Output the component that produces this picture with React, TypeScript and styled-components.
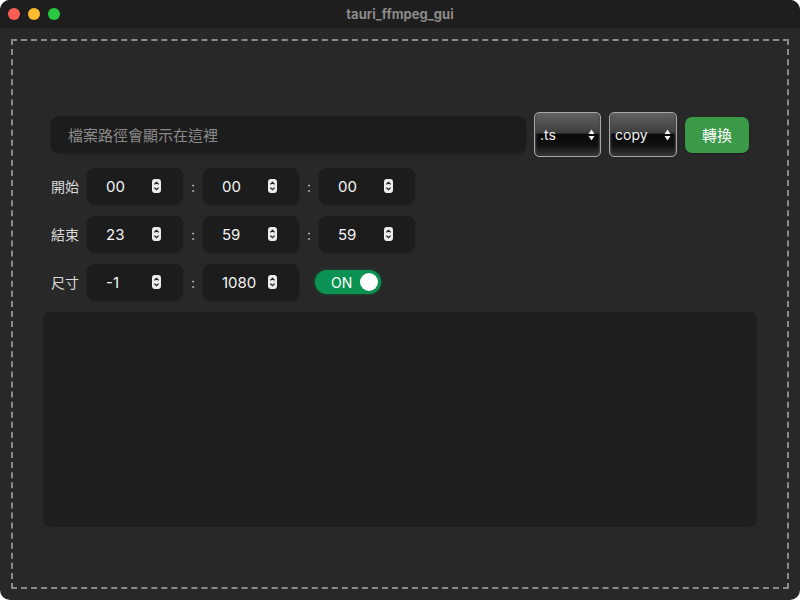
import React from 'react';
import styled, { createGlobalStyle } from 'styled-components';

const GlobalStyle = createGlobalStyle`
  html, body {
    margin: 0;
    padding: 0;
    background: #ffffff;
  }
  * {
    box-sizing: border-box;
  }
`;

const font = `"Inter", "Noto Sans CJK TC", sans-serif`;

const Window = styled.div`
  width: 800px;
  height: 600px;
  border-radius: 10px;
  overflow: hidden;
  background: #282828;
  display: flex;
  flex-direction: column;
  font-family: ${font};
`;

const TitleBar = styled.div`
  height: 28px;
  flex-shrink: 0;
  background: #1e1e1e;
  display: flex;
  align-items: center;
  justify-content: center;
  position: relative;
`;

const Lights = styled.div`
  position: absolute;
  left: 8px;
  top: 8px;
  display: flex;
  gap: 8px;
`;

const Light = styled.span<{ $color: string }>`
  width: 12px;
  height: 12px;
  border-radius: 50%;
  background: ${(p) => p.$color};
`;

const Title = styled.div`
  color: #8a8a8a;
  font-size: 13px;
  font-weight: 700;
`;

const Body = styled.div`
  flex: 1;
  display: flex;
  padding: 11px;
`;

const Frame = styled.div`
  flex: 1;
  border: 2px dashed #8a8a8a;
  display: flex;
  flex-direction: column;
  padding: 71px 30px 60px 30px;
`;

const Form = styled.div`
  display: flex;
  flex-direction: column;
  padding: 0 8px 0 8px;
`;

const TopRow = styled.div`
  display: flex;
  align-items: center;
  gap: 8px;
  height: 45px;
  margin-bottom: 11px;
`;

const PathInput = styled.div`
  flex: 1;
  height: 37px;
  border-radius: 8px;
  background: #1c1c1c;
  box-shadow: 0 1px 2px rgba(0, 0, 0, 0.25);
  display: flex;
  align-items: center;
  padding-left: 17px;
  color: #8a8a8a;
  font-size: 15px;
`;

const SelectBox = styled.div<{ $width: number }>`
  position: relative;
  width: ${(p) => p.$width}px;
  height: 45px;
  border: 1px solid #a8a8a8;
  border-radius: 5px;
  background: linear-gradient(
    to bottom,
    #626262 0%,
    #3e3e3e 46%,
    #0a0a0a 50%,
    #101010 76%,
    #383838 100%
  );
  box-shadow: inset 3px 0 2px -2px #4a4a4a, inset -3px 0 2px -2px #4a4a4a;
  color: #f2f2f2;
  font-size: 14px;
  display: flex;
  align-items: center;
  padding-left: 5px;
  overflow: hidden;
`;

const SelectArrows = styled.svg`
  position: absolute;
  right: 5px;
  top: 16px;
`;

const ConvertButton = styled.button`
  width: 64px;
  height: 36px;
  border: none;
  border-radius: 7px;
  background: #3a9a48;
  color: #ffffff;
  font-family: ${font};
  font-size: 15px;
  box-shadow: 0 1px 2px rgba(0, 0, 0, 0.3);
`;

const Row = styled.div`
  display: flex;
  align-items: center;
  height: 36px;
  margin-bottom: 12px;
`;

const Label = styled.div`
  width: 36px;
  color: #d8d8d8;
  font-size: 14px;
`;

const NumberBox = styled.div`
  width: 96px;
  height: 36px;
  border-radius: 8px;
  background: #1c1c1c;
  box-shadow: 0 1px 2px rgba(0, 0, 0, 0.25);
  display: flex;
  align-items: center;
  justify-content: space-between;
  padding: 0 22px 0 19px;
  color: #f4f4f4;
  font-size: 15px;
`;

const Colon = styled.div`
  width: 20px;
  text-align: center;
  color: #cfcfcf;
  font-size: 14px;
`;

const Toggle = styled.div<{ $on: boolean }>`
  margin-left: 16px;
  width: 66px;
  height: 24px;
  border-radius: 12px;
  background: ${(p) => (p.$on ? '#0b9151' : '#555')};
  box-shadow: 0 0 3px rgba(11, 145, 81, 0.6);
  display: flex;
  align-items: center;
  justify-content: space-between;
  padding: 0 3px 0 16px;
  color: #ffffff;
  font-size: 14px;
`;

const Knob = styled.span`
  width: 18px;
  height: 18px;
  border-radius: 50%;
  background: #ffffff;
`;

const LogArea = styled.div`
  height: 215px;
  border-radius: 8px;
  background: #1f1f1f;
`;

const Spinner = () => (
  <svg width="9" height="14" viewBox="0 0 9 14">
    <rect x="0" y="0" width="9" height="14" rx="3" fill="#ececec" />
    <path d="M2.4 5.4 L4.5 3.4 L6.6 5.4" stroke="#1c1c1c" strokeWidth="1.3" fill="none" />
    <path d="M2.4 8.6 L4.5 10.6 L6.6 8.6" stroke="#1c1c1c" strokeWidth="1.3" fill="none" />
  </svg>
);

const Select = ({ value, width }: { value: string; width: number }) => (
  <SelectBox $width={width}>
    {value}
    <SelectArrows width="7" height="12" viewBox="0 0 7 12">
      <path d="M0.5 5 L3.5 0.5 L6.5 5 Z" fill="#f0f0f0" />
      <path d="M0.5 7 L3.5 11.5 L6.5 7 Z" fill="#f0f0f0" />
    </SelectArrows>
  </SelectBox>
);

const NumberField = ({ value }: { value: string }) => (
  <NumberBox>
    <span>{value}</span>
    <Spinner />
  </NumberBox>
);

const TimeRow = ({ label, values }: { label: string; values: string[] }) => (
  <Row>
    <Label>{label}</Label>
    {values.map((v, i) => (
      <React.Fragment key={i}>
        {i > 0 && <Colon>:</Colon>}
        <NumberField value={v} />
      </React.Fragment>
    ))}
  </Row>
);

export default function App() {
  return (
    <>
      <GlobalStyle />
      <Window>
        <TitleBar>
          <Lights>
            <Light $color="#fe5f57" />
            <Light $color="#febc2e" />
            <Light $color="#28c840" />
          </Lights>
          <Title>tauri_ffmpeg_gui</Title>
        </TitleBar>
        <Body>
          <Frame>
            <Form>
              <TopRow>
                <PathInput>檔案路徑會顯示在這裡</PathInput>
                <Select value=".ts" width={67} />
                <Select value="copy" width={68} />
                <ConvertButton>轉換</ConvertButton>
              </TopRow>
              <TimeRow label="開始" values={['00', '00', '00']} />
              <TimeRow label="結束" values={['23', '59', '59']} />
              <Row>
                <Label>尺寸</Label>
                <NumberField value="-1" />
                <Colon>:</Colon>
                <NumberField value="1080" />
                <Toggle $on>
                  ON
                  <Knob />
                </Toggle>
              </Row>
            </Form>
            <LogArea />
          </Frame>
        </Body>
      </Window>
    </>
  );
}
